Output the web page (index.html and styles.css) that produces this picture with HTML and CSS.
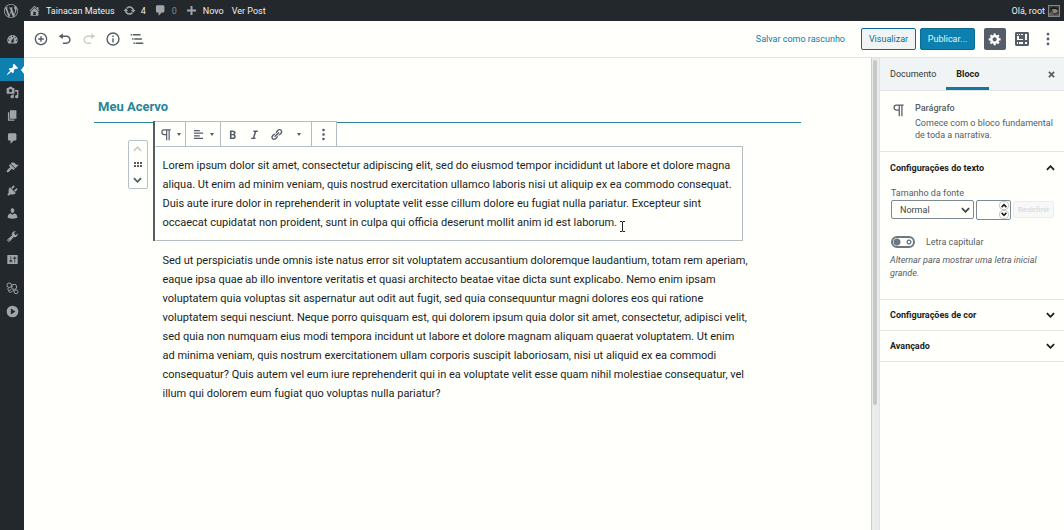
FILE: index.html
```html
<!DOCTYPE html>
<html lang="pt-BR">
<head>
<meta charset="utf-8">
<meta name="viewport" content="width=device-width, initial-scale=1">
<title>Editar post</title>
<link rel="stylesheet" href="styles.css">
</head>
<body>
<div class="app">
  <header class="adminbar">
    <a class="bar-item bar-logo" href="#" aria-label="WordPress"><svg class="icon" viewBox="0 0 20 20"><path d="M20 10c0-5.51-4.49-10-10-10C4.48 0 0 4.49 0 10c0 5.52 4.48 10 10 10 5.51 0 10-4.48 10-10zM7.78 15.37L4.37 6.22c.55-.02 1.17-.08 1.17-.08.5-.06.44-1.13-.06-1.11 0 0-1.45.11-2.37.11-.18 0-.37 0-.58-.01C4.12 2.69 6.87 1.11 10 1.11c2.33 0 4.45.87 6.05 2.34-.68-.11-1.65.39-1.65 1.58 0 .74.45 1.36.9 2.1.35.61.55 1.36.55 2.46 0 1.49-1.4 5-1.4 5l-3.03-8.37c.54-.02.82-.17.82-.17.5-.05.44-1.25-.06-1.22 0 0-1.44.12-2.38.12-.87 0-2.33-.12-2.33-.12-.5-.03-.56 1.2-.06 1.22l.92.08 1.26 3.41zM17.41 10c.24-.64.74-1.87.43-4.25.7 1.29 1.05 2.71 1.05 4.25 0 3.29-1.73 6.24-4.4 7.78.97-2.59 1.94-5.2 2.92-7.78zM6.1 18.09C3.12 16.65 1.11 13.53 1.11 10c0-1.3.23-2.48.72-3.59C3.25 10.3 4.67 14.2 6.1 18.09zm4.03-6.63l2.58 6.98c-.86.29-1.76.45-2.71.45-.79 0-1.57-.11-2.29-.33.81-2.38 1.62-4.74 2.42-7.1z"/></svg></a>
    <a class="bar-item" href="#"><svg class="icon" viewBox="0 0 20 20"><path d="M16 8.5l1.53 1.53-1.06 1.06L10 4.6l-6.47 6.49-1.06-1.06L10 2.5l4 4v-2h2v4zm-6-2.46l6 5.99V18H4v-5.97zM12 17v-5H8v5h4z"/></svg>Tainacan Mateus</a>
    <a class="bar-item" href="#"><svg class="icon" viewBox="0 0 20 20"><path d="M10.2 3.28c3.53 0 6.43 2.61 6.92 6h2.08l-3.5 4-3.5-4h2.32c-.45-1.97-2.21-3.45-4.32-3.45-1.45 0-2.73.71-3.54 1.78L4.95 5.66C6.23 4.2 8.11 3.28 10.2 3.28zm-.4 13.44c-3.52 0-6.43-2.61-6.92-6H.8l3.5-4c1.17 1.33 2.33 2.67 3.5 4H5.48c.45 1.97 2.21 3.45 4.32 3.45 1.45 0 2.73-.71 3.54-1.78l1.71 1.95c-1.28 1.46-3.15 2.38-5.25 2.38z"/></svg>4</a>
    <a class="bar-item bar-muted" href="#"><svg class="icon" viewBox="0 0 20 20"><path d="M5 2h9c1.1 0 2 .9 2 2v7c0 1.1-.9 2-2 2h-2l-5 5v-5H5c-1.1 0-2-.9-2-2V4c0-1.1.9-2 2-2z"/></svg>0</a>
    <a class="bar-item" href="#"><svg class="icon" viewBox="0 0 20 20"><path d="M8.500 3h3v5.500H17v3h-5.500V17h-3v-5.500H3v-3h5.500z"/></svg>Novo</a>
    <a class="bar-item" href="#">Ver Post</a>
    <a class="bar-item bar-user" href="#">Olá, root
      <svg class="avatar" viewBox="0 0 12 12"><rect x=".5" y=".5" width="11" height="11" fill="#3a3b3b" stroke="#83888b"/><path d="M2 4l3-2 5 1v2L7 4 4 6z" fill="#14181a"/><path d="M4 4h4l2 2-2 2H5z" fill="#8d8078"/><path d="M1 8l3-1 2 3 5-1v2H1z" fill="#625e5b"/></svg></a>
  </header>

  <div class="workspace">
    <nav class="menu" aria-label="Menu principal">
      <a href="#" class="menu-item" aria-label="Painel"><svg class="icon" viewBox="0 0 20 20"><path fill-rule="evenodd" d="M3.760 16h12.480c1.100-1.370 1.760-3.110 1.760-5 0-4.420-3.580-8-8-8s-8 3.580-8 8c0 1.890.66 3.630 1.760 5zM10 4c.55 0 1 .45 1 1s-.45 1-1 1-1-.45-1-1 .45-1 1-1zM6 6c.55 0 1 .45 1 1s-.45 1-1 1-1-.45-1-1 .45-1 1-1zm8 0c.55 0 1 .45 1 1s-.45 1-1 1-1-.45-1-1 .45-1 1-1zm-5.370 5.550L12 7v6c0 1.100-.9 2-2 2s-2-.9-2-2c0-.57.24-1.080.63-1.450zM4 10c.55 0 1 .45 1 1s-.45 1-1 1-1-.45-1-1 .45-1 1-1zm12 0c.55 0 1 .45 1 1s-.45 1-1 1-1-.45-1-1 .45-1 1-1z"/></svg></a>
      <a href="#" class="menu-item menu-current" aria-label="Posts"><svg class="icon" viewBox="0 0 20 20"><path d="M10.440 3.020l1.820-1.820 6.360 6.350-1.830 1.820c-1.050-.68-2.480-.57-3.410.36l-.75.75c-.92.93-1.040 2.350-.35 3.410l-1.830 1.820-2.410-2.410-2.800 2.790c-.42.42-3.380 2.710-3.800 2.290s1.860-3.390 2.280-3.810l2.790-2.790L4.100 9.360l1.830-1.820c1.050.69 2.480.57 3.400-.36l.75-.75c.93-.92 1.050-2.350.36-3.410z"/></svg></a>
      <a href="#" class="menu-item" aria-label="Mídia"><svg class="icon" viewBox="0 0 20 20"><path fill-rule="evenodd" d="M13 11V4c0-.55-.45-1-1-1h-1.670L9 1H5L3.670 3H2c-.55 0-1 .45-1 1v7c0 .55.45 1 1 1h10c.55 0 1-.45 1-1zM7 4.500c1.380 0 2.500 1.120 2.500 2.500S8.380 9.500 7 9.500 4.500 8.380 4.500 7 5.620 4.500 7 4.500zM14 6h5v10.500c0 1.380-1.120 2.500-2.500 2.500S14 17.880 14 16.500s1.120-2.500 2.500-2.500c.17 0 .34.02.5.05V9h-3V6zm-4 8.050V13h2v3.500c0 1.380-1.120 2.500-2.500 2.500S7 17.880 7 16.500 8.120 14 9.500 14c.17 0 .34.02.5.05z"/></svg></a>
      <a href="#" class="menu-item" aria-label="Páginas"><svg class="icon" viewBox="0 0 20 20"><path d="M6 15V2h10v13H6zm-1 1h8v2H3V5h2v11z"/></svg></a>
      <a href="#" class="menu-item" aria-label="Comentários"><svg class="icon" viewBox="0 0 20 20"><path d="M5 2h9c1.100 0 2 .9 2 2v7c0 1.100-.9 2-2 2h-2l-5 5v-5H5c-1.100 0-2-.9-2-2V4c0-1.100.9-2 2-2z"/></svg></a>
      <a href="#" class="menu-item menu-group" aria-label="Aparência"><svg class="icon" viewBox="0 0 20 20"><path d="M14.480 11.060L7.410 3.990l1.500-1.500c.5-.56 2.300-.47 3.510.32 1.210.8 1.430 1.280 2.910 2.100 1.180.64 2.450 1.260 4.450.85zm-.71.71L6.700 4.700 4.930 6.470c-.39.39-.39 1.020 0 1.410l1.060 1.060c.39.39.39 1.030 0 1.420-.6.6-1.430 1.110-2.210 1.690-.35.26-.7.53-1.010.84C1.430 14.230.4 16.080 1.400 17.070c.99 1 2.840-.03 4.180-1.360.31-.31.58-.66.85-1.020.57-.78 1.080-1.610 1.690-2.210.39-.39 1.020-.39 1.410 0l1.060 1.060c.39.39 1.020.39 1.410 0z"/></svg></a>
      <a href="#" class="menu-item" aria-label="Plugins"><svg class="icon" viewBox="0 0 20 20"><path d="M13.110 4.360L9.870 7.600 8 5.730l3.240-3.240c.35-.34 1.050-.2 1.560.32.52.51.66 1.210.31 1.550zm-8 1.770l.91-1.120 9.010 9.010-1.190.84c-.71.71-2.630 1.160-3.820 1.160H6.140L4.900 17.260c-.59.59-1.540.59-2.120 0-.59-.58-.59-1.530 0-2.120l1.240-1.240v-3.880c0-1.130.4-3.190 1.090-3.890zm7.260 3.970l3.240-3.240c.34-.35 1.040-.21 1.550.31.52.51.66 1.210.31 1.550l-3.240 3.250z"/></svg></a>
      <a href="#" class="menu-item" aria-label="Usuários"><svg class="icon" viewBox="0 0 20 20"><path d="M10 9.250c-2.270 0-2.730-3.440-2.730-3.440C7 4.020 7.820 2 9.970 2c2.160 0 2.980 2.020 2.710 3.810 0 0-.41 3.440-2.680 3.440zm0 2.570L12.720 10c2.390 0 4.520 2.330 4.520 4.530v2.490s-3.650 1.130-7.240 1.130c-3.650 0-7.240-1.130-7.240-1.130v-2.490c0-2.250 1.940-4.480 4.470-4.480z"/></svg></a>
      <a href="#" class="menu-item" aria-label="Ferramentas"><svg class="icon" viewBox="0 0 20 20"><path fill-rule="evenodd" d="M16.680 9.770c-1.340 1.340-3.300 1.670-4.950.99l-5.410 6.520c-.99.99-2.590.99-3.580 0s-.99-2.590 0-3.570l6.520-5.420c-.68-1.650-.35-3.610.99-4.950 1.280-1.280 3.120-1.620 4.720-1.060l-2.890 2.890 2.820 2.820 2.860-2.870c.53 1.580.18 3.390-1.080 4.650zM3.810 16.210c.4.39 1.040.39 1.430 0 .4-.4.4-1.040 0-1.430-.39-.4-1.030-.4-1.430 0-.39.39-.39 1.030 0 1.430z"/></svg></a>
      <a href="#" class="menu-item" aria-label="Configurações"><svg class="icon" viewBox="0 0 20 20"><path fill-rule="evenodd" d="M18 16V4c0-.55-.45-1-1-1H3c-.55 0-1 .45-1 1v12c0 .55.45 1 1 1h14c.55 0 1-.45 1-1zM8 11h1c.55 0 1 .45 1 1s-.45 1-1 1H8v1.500c0 .28-.22.5-.5.5s-.5-.22-.5-.5V13H6c-.55 0-1-.45-1-1s.45-1 1-1h1V5.500c0-.28.22-.5.5-.5s.5.22.5.5V11zm5-2h-1c-.55 0-1-.45-1-1s.45-1 1-1h1V5.500c0-.28.22-.5.5-.5s.5.22.5.5V7h1c.55 0 1 .45 1 1s-.45 1-1 1h-1v5.500c0 .28-.22.5-.5.5s-.5-.22-.5-.5V9z"/></svg></a>
      <a href="#" class="menu-item menu-group" aria-label="Tainacan"><svg class="icon icon-line" viewBox="0 0 20 20"><circle cx="5" cy="5" r="3.500"/><circle cx="12.500" cy="7.500" r="4"/><circle cx="15.500" cy="15" r="3"/><path d="M5 8.500c-2 1-3 2.500-1.500 4s3.500 0 5-2M4 13c0 2.500 2 3.500 4 2.500s1.500-3 4.500-2M8 5l2 2"/></svg></a>
      <a href="#" class="menu-item" aria-label="Recolher menu"><svg class="icon" viewBox="0 0 20 20"><path fill-rule="evenodd" d="M10 1a9 9 0 1 0 0 18 9 9 0 0 0 0-18zM7.500 5.500L14.500 10l-7 4.500z"/></svg></a>
    </nav>

    <div class="main">
      <div class="editor-header">
        <div class="tools">
          <button class="tool" aria-label="Adicionar bloco"><svg class="icon" viewBox="0 0 20 20"><path d="M10 1c-5 0-9 4-9 9s4 9 9 9 9-4 9-9-4-9-9-9zm0 16c-3.900 0-7-3.100-7-7s3.100-7 7-7 7 3.100 7 7-3.100 7-7 7zm1-11H9v3H6v2h3v3h2v-3h3V9h-3V6z"/></svg></button>
          <button class="tool" aria-label="Desfazer"><svg class="icon" viewBox="0 0 20 20"><path d="M12 5H7V2L1 6l6 4V7h5c2.200 0 4 1.800 4 4s-1.800 4-4 4H7v2h5c3.300 0 6-2.700 6-6s-2.700-6-6-6z"/></svg></button>
          <button class="tool" disabled aria-label="Refazer"><svg class="icon" viewBox="0 0 20 20"><path d="M8 5h5V2l6 4-6 4V7H8c-2.200 0-4 1.800-4 4s1.800 4 4 4h5v2H8c-3.300 0-6-2.700-6-6s2.700-6 6-6z"/></svg></button>
          <button class="tool" aria-label="Estrutura do conteúdo"><svg class="icon" viewBox="2 2 20 20"><path d="M11 7h2v2h-2zm0 4h2v6h-2zm1-8.500a9.500 9.500 0 1 0 0 19 9.500 9.500 0 0 0 0-19zm0 17a7.500 7.500 0 1 1 0-15 7.500 7.500 0 0 1 0 15z"/></svg></button>
          <button class="tool" aria-label="Navegação por blocos"><svg class="icon" viewBox="2 2 20 20"><path d="M5 5H3v2h2V5zm3 8h11v-2H8v2zm9-8H6v2h11V5zM7 11H5v2h2v-2zm0 8h2v-2H7v2zm3-2v2h11v-2H10z"/></svg></button>
        </div>
        <div class="actions">
          <button class="btn-link">Salvar como rascunho</button>
          <button class="btn btn-preview">Visualizar</button>
          <button class="btn btn-publish">Publicar...</button>
          <button class="tool tool-active" aria-label="Configurações"><svg class="icon" viewBox="0 0 20 20"><path fill-rule="evenodd" d="M18 12h-2.180c-.17.7-.44 1.350-.81 1.930l1.540 1.540-2.100 2.100-1.540-1.540c-.58.36-1.230.63-1.910.79V19H8v-2.180c-.68-.16-1.330-.43-1.910-.79l-1.540 1.540-2.120-2.120 1.540-1.540c-.36-.58-.63-1.230-.79-1.910H1V9.030h2.170c.16-.7.44-1.350.8-1.940L2.430 5.550l2.100-2.100 1.540 1.540c.58-.37 1.240-.64 1.930-.81V2h3v2.180c.68.16 1.330.43 1.910.79l1.540-1.540 2.120 2.120-1.540 1.540c.36.59.64 1.240.8 1.940H18V12zm-8.500 1.500c1.660 0 3-1.340 3-3s-1.340-3-3-3-3 1.340-3 3 1.340 3 3 3z"/></svg></button>
          <button class="tool" aria-label="Tainacan"><svg class="icon" viewBox="0 0 14 14"><path fill-rule="evenodd" d="M1 0h12l1 1v12l-1 1H1l-1-1V1zM2 2v1h1V2zM4 2v1h1V2zM6 2v1h2V2zM10 2v6h2V2zM2 4v4h6V7H4V4zM2 10v2h1v-2zM4 10v2h4v-2zM10 10v2h2v-2z"/></svg></button>
          <button class="tool" aria-label="Mais opções"><svg class="icon" viewBox="0 0 20 20"><circle cx="10" cy="3" r="2"/><circle cx="10" cy="10" r="2"/><circle cx="10" cy="17" r="2"/></svg></button>
        </div>
      </div>

      <div class="columns">
        <main class="canvas">
          <h1 class="post-title">Meu Acervo</h1>
          <section class="block block-selected">
            <div class="mover">
              <button disabled aria-label="Mover para cima"><svg class="chevron" viewBox="0 0 10 6"><path d="M1 5l4-4 4 4"/></svg></button>
              <button aria-label="Arrastar"><svg class="grip" viewBox="0 0 8 5"><path d="M0 0h2v2H0zM3 0h2v2H3zM6 0h2v2H6zM0 3h2v2H0zM3 3h2v2H3zM6 3h2v2H6z"/></svg></button>
              <button aria-label="Mover para baixo"><svg class="chevron" viewBox="0 0 10 6"><path d="M1 1l4 4 4-4"/></svg></button>
            </div>
            <div class="toolbar">
              <div class="tool-group">
                <button class="tool-wide" aria-label="Tipo de bloco"><svg class="icon" viewBox="0 0 20 20"><path fill-rule="evenodd" d="M8 2h10v1.800h-1.500V19h-1.800V3.800h-2V19h-1.800v-8H8a4.500 4.500 0 0 1 0-9zm0 1.800a2.700 2.700 0 0 0 0 5.400h2.900V3.800z"/></svg><span class="caret"></span></button>
              </div>
              <div class="tool-group">
                <button class="tool-wide" aria-label="Alinhamento"><svg class="icon" viewBox="0 0 20 20"><path d="M12 5V3H3v2h9zm5 4V7H3v2h14zm-5 4v-2H3v2h9zm5 4v-2H3v2h14z"/></svg><span class="caret"></span></button>
              </div>
              <div class="tool-group">
                <button class="tool" aria-label="Negrito"><svg class="icon" viewBox="0 0 20 20"><path fill-rule="evenodd" d="M6 4v13h4.540c1.370 0 2.460-.33 3.260-1 .8-.66 1.200-1.580 1.200-2.770 0-.84-.17-1.510-.51-2.010s-.9-.85-1.670-1.030v-.09c.57-.1 1.020-.4 1.360-.9s.51-1.130.51-1.910c0-1.140-.39-1.980-1.170-2.500C12.750 4.260 11.500 4 9.780 4H6zm2.570 5.150V6.260h1.360c.73 0 1.270.11 1.610.32.34.22.51.58.51 1.070 0 .54-.16.92-.47 1.150s-.82.35-1.510.35h-1.500zm0 2.190h1.600c1.440 0 2.160.53 2.160 1.610 0 .6-.17 1.050-.51 1.340s-.86.43-1.570.43H8.570v-3.380z"/></svg></button>
                <button class="tool" aria-label="Itálico"><svg class="icon" viewBox="0 0 20 20"><path d="M14.780 6h-2.130l-2.800 9h2.120l-.62 2H4.600l.62-2h2.140l2.800-9H8.030l.62-2h6.750z"/></svg></button>
                <button class="tool" aria-label="Link"><svg class="icon" viewBox="0 0 20 20"><path d="M17.740 2.760c1.680 1.690 1.680 4.410 0 6.100l-1.530 1.520c-1.120 1.120-2.700 1.470-4.140 1.090l2.620-2.610.76-.77.76-.76c.84-.84.84-2.200 0-3.040-.84-.85-2.200-.85-3.040 0l-.77.76-3.380 3.380c-.37-1.440-.02-3.020 1.100-4.140l1.520-1.530c1.690-1.680 4.420-1.680 6.100 0zM8.590 13.430l5.340-5.340c.42-.42.42-1.100 0-1.520-.44-.43-1.130-.39-1.530 0l-5.330 5.340c-.42.42-.42 1.100 0 1.520.44.43 1.130.39 1.520 0zm-.76 2.290l4.140-4.150c.38 1.440.03 3.020-1.090 4.140l-1.520 1.530c-1.690 1.680-4.410 1.680-6.100 0-1.680-1.680-1.680-4.420 0-6.100l1.530-1.520c1.120-1.120 2.700-1.470 4.140-1.100l-4.140 4.150c-.85.84-.85 2.200 0 3.050.84.84 2.200.84 3.040 0z"/></svg></button>
                <button class="tool" aria-label="Mais formatação"><span class="caret"></span></button>
              </div>
              <div class="tool-group">
                <button class="tool" aria-label="Opções do bloco"><svg class="icon" viewBox="0 0 20 20"><circle cx="10" cy="3" r="2"/><circle cx="10" cy="10" r="2"/><circle cx="10" cy="17" r="2"/></svg></button>
              </div>
            </div>
            <p class="block-text">Lorem ipsum dolor sit amet, consectetur adipiscing elit, sed do eiusmod tempor incididunt ut labore et dolore magna aliqua. Ut enim ad minim veniam, quis nostrud exercitation ullamco laboris nisi ut aliquip ex ea commodo consequat. Duis aute irure dolor in reprehenderit in voluptate velit esse cillum dolore eu fugiat nulla pariatur. Excepteur sint occaecat cupidatat non proident, sunt in culpa qui officia deserunt mollit anim id est laborum.</p>
            <svg class="pointer" viewBox="0 0 5 11"><path d="M0 .5h2l.5.5.5-.5h2M0 10.500h2l.5-.5.5.5h2M2.500 1v9"/></svg>
          </section>
          <section class="block block-wide">
            <p class="block-text">Sed ut perspiciatis unde omnis iste natus error sit voluptatem accusantium doloremque laudantium, totam rem aperiam, eaque ipsa quae ab illo inventore veritatis et quasi architecto beatae vitae dicta sunt explicabo. Nemo enim ipsam voluptatem quia voluptas sit aspernatur aut odit aut fugit, sed quia consequuntur magni dolores eos qui ratione voluptatem sequi nesciunt. Neque porro quisquam est, qui dolorem ipsum quia dolor sit amet, consectetur, adipisci velit, sed quia non numquam eius modi tempora incidunt ut labore et dolore magnam aliquam quaerat voluptatem. Ut enim <br>ad minima veniam, quis nostrum exercitationem ullam corporis suscipit laboriosam, nisi ut aliquid ex ea commodi consequatur? Quis autem vel eum iure reprehenderit qui in ea voluptate velit esse quam nihil molestiae consequatur, vel illum qui dolorem eum fugiat quo voluptas nulla pariatur?</p>
          </section>
        </main>
        <div class="scrollbar"><div class="scroll-thumb"></div></div>

        <aside class="settings">
          <div class="tabs">
            <button class="tab">Documento</button>
            <button class="tab tab-active">Bloco</button>
            <button class="close" aria-label="Fechar"><svg class="cross" viewBox="0 0 8 8"><path d="M1 1l6 6M7 1L1 7"/></svg></button>
          </div>
          <div class="card">
            <svg class="icon" viewBox="0 0 20 20"><path fill-rule="evenodd" d="M8 2h10v1.800h-1.500V19h-1.800V3.800h-2V19h-1.800v-8H8a4.500 4.500 0 0 1 0-9zm0 1.800a2.700 2.700 0 0 0 0 5.400h2.900V3.800z"/></svg>
            <div>
              <h2 class="card-title">Parágrafo</h2>
              <p class="card-text">Comece com o bloco fundamental de toda a narrativa.</p>
            </div>
          </div>
          <section class="panel panel-open">
            <button class="panel-toggle" aria-expanded="true">Configurações do texto<svg class="chevron" viewBox="0 0 10 6"><path d="M1 5l4-4 4 4"/></svg></button>
            <label class="field-label" for="size">Tamanho da fonte</label>
            <div class="size-row">
              <div class="select-wrap">
                <select id="size"><option>Normal</option></select>
                <svg class="chevron" viewBox="0 0 10 6"><path d="M1 1l4 4 4-4"/></svg>
              </div>
              <div class="number-wrap">
                <input type="number" aria-label="Tamanho personalizado">
                <div class="spin"><button aria-label="Aumentar"><svg viewBox="0 0 10 6"><path d="M2 5l3-3 3 3"/></svg></button><button aria-label="Diminuir"><svg viewBox="0 0 10 6"><path d="M2 1l3 3 3-3"/></svg></button></div>
              </div>
              <button class="reset" disabled>Redefinir</button>
            </div>
            <div class="toggle-row">
              <input class="toggle" type="checkbox" id="cap">
              <label for="cap">Letra capitular</label>
            </div>
            <p class="help">Alternar para mostrar uma letra inicial grande.</p>
          </section>
          <section class="panel"><button class="panel-toggle">Configurações de cor<svg class="chevron" viewBox="0 0 10 6"><path d="M1 1l4 4 4-4"/></svg></button></section>
          <section class="panel"><button class="panel-toggle">Avançado<svg class="chevron" viewBox="0 0 10 6"><path d="M1 1l4 4 4-4"/></svg></button></section>
        </aside>
      </div>
    </div>
  </div>
</div>
</body>
</html>
```
FILE: styles.css
```css
* { box-sizing: border-box; }
body { margin: 0; font: 9px/12px Roboto, sans-serif; color: #555d66; background: #fffffc; }
button, input, select { font: inherit; color: inherit; margin: 0; padding: 0; border: 0; background: none; }
h1, h2, p { margin: 0; }
a { color: inherit; text-decoration: none; }
svg { display: block; fill: currentColor; flex: none; }
.icon { width: 14px; height: 14px; }
.icon-line { fill: none; stroke: currentColor; stroke-width: 1.5; }
.chevron { width: 9px; height: 6px; fill: none; stroke: currentColor; stroke-width: 2; }

.app { display: flex; flex-direction: column; min-height: 100vh; }

.adminbar { display: flex; align-items: center; height: 21px; padding: 0 4px; gap: 8px; background: #22282c; color: #eee; font-size: 9px; }
.bar-item { display: flex; align-items: center; gap: 5px; }
.bar-item .icon { width: 13px; height: 13px; color: #a0a5aa; }
.bar-logo { margin-right: 2px; }
.bar-logo .icon { width: 14px; height: 14px; }
.bar-muted { color: #82878c; }
.bar-user { margin-left: auto; gap: 3px; }
.avatar { width: 12px; height: 12px; }

.workspace { display: flex; flex: 1; }
.menu { width: 24px; flex: none; padding-top: 7px; background: #22282c; color: #a0a5aa; }
.menu-item { display: flex; align-items: center; justify-content: center; height: 23px; }
.menu-item .icon { width: 13px; height: 13px; }
.menu-group { margin-top: 6px; }
.menu-current { position: relative; margin-top: 7px; background: #0d80b0; color: #fff; }
.menu-current::after { content: ""; position: absolute; right: 0; top: 8px; border: 4px solid transparent; border-left: 0; border-right: 3px solid #fffffc; }

.main { display: flex; flex: 1; flex-direction: column; min-width: 0; }
.editor-header { display: flex; align-items: center; justify-content: space-between; height: 37px; padding: 0 5px 0 6px; border-bottom: 1px solid #e2e4e4; }
.tools, .actions { display: flex; align-items: center; }
.tools { gap: 2px; }
.actions { gap: 4px; }
.tool { display: flex; align-items: center; justify-content: center; width: 22px; height: 22px; border-radius: 2px; }
.tool:disabled { color: #ccc; }
.tool-active { margin: 0 1px 0 5px; background: #555d66; color: #fff; }
.btn-link { margin-right: 12px; color: #0a7da8; }
.btn { height: 22px; width: 55px; border: 1px solid #0a6c94; border-radius: 2px; }
.btn-preview { background: #f1f4f4; color: #0a6c94; }
.btn-publish { background: #0d80b0; color: #e6f4f8; }

.columns { display: flex; flex: 1; }
.canvas { flex: 1; min-width: 0; padding: 36px 70px 24px; }
.post-title { padding: 4px 4px 6px; font-size: 13px; line-height: 18px; font-weight: 700; color: #298596; border-bottom: 1px solid #298596; }
.block { position: relative; max-width: 590px; margin: 0 auto; font-size: 11px; line-height: 19px; color: #191e23; }
.block-selected { margin-top: -2px; border-left: 2px solid #555d66; }
.block-text { padding: 10px 0 9px 10px; }
.block-selected .block-text { padding: 9px 7px 8px; border: 1px solid #b5bcc2; border-left-color: transparent; }
.block-wide .block-text { margin-right: -9px; }
.toolbar { display: flex; width: max-content; height: 25px; color: #555d66; border-top: 1px solid #b5bcc2; background: #fffffc; }
.tool-group { display: flex; align-items: center; padding: 0 1px; border-right: 1px solid #b5bcc2; }
.tool-group:first-child { padding: 0; }
.tool-wide { display: flex; align-items: center; justify-content: center; gap: 5px; width: 30px; height: 24px; }
.tool-group + .tool-group .tool-wide { width: 32px; }
.toolbar .icon { width: 13px; height: 13px; }
.caret { border: 2px solid transparent; border-top: 3px solid currentColor; border-bottom: 0; }
.mover { position: absolute; top: 19px; left: -27px; display: flex; flex-direction: column; width: 20px; height: 49px; color: #555d66; border: 1px solid #b5c0c8; border-radius: 2px; }
.mover button { display: flex; flex: 1; align-items: center; justify-content: center; }
.mover button:disabled { color: #ccc; }
.grip { width: 8px; height: 5px; }
.pointer { position: absolute; left: 465px; bottom: 9px; width: 5px; height: 11px; fill: none; stroke: #222; }

.scrollbar { width: 8px; flex: none; padding: 2px 1px; border-left: 1px solid #c8cccb; background: #e9ecea; }
.scroll-thumb { width: 4px; height: 345px; border-radius: 2px; background: #c5c8c5; }

.settings { width: 185px; flex: none; border-left: 1px solid #e0e3e3; }
.tabs { display: flex; height: 33px; background: #f1f4f4; border-bottom: 1px solid #e2e4e7; color: #32373c; }
.tab { padding: 0 10px; border-bottom: 3px solid transparent; border-top: 2px solid transparent; }
.tab-active { font-weight: 700; color: #191e23; border-bottom-color: #11789e; }
.close { margin-left: auto; padding: 0 10px; color: #555d66; }
.cross { width: 7px; height: 7px; fill: none; stroke: currentColor; stroke-width: 2; }
.card { display: flex; gap: 10px; padding: 11px 10px 10px 11px; border-bottom: 1px solid #e2e4e7; }
.card-title { font-size: 9px; line-height: 12px; font-weight: 500; padding-bottom: 3px; }
.card .icon { margin-top: 1px; }
.panel { padding: 0 10px; border-bottom: 1px solid #e2e4e7; }
.panel-open { padding-top: 1px; padding-bottom: 19px; }
.panel-toggle { display: flex; align-items: center; justify-content: space-between; width: 100%; height: 30px; font-weight: 700; color: #191e23; }
.panel-toggle .chevron, .close .cross { margin-right: -1px; }
.field-label { display: block; margin-top: 4px; padding-left: 1px; }
.size-row { display: flex; gap: 2px; height: 20px; margin-top: 1px; padding-left: 1px; }
.select-wrap { position: relative; width: 84px; color: #40464d; }
.select-wrap select { appearance: none; width: 100%; height: 19px; padding: 0 8px; border: 1px solid #7e8993; border-radius: 2px; background: transparent; }
.select-wrap .chevron { position: absolute; right: 4px; top: 7px; }
.number-wrap { position: relative; width: 36px; }
.number-wrap input { appearance: textfield; width: 100%; height: 20px; border: 1px solid #7e8993; border-radius: 2px; }
.spin { position: absolute; top: 1px; right: 2px; display: flex; flex-direction: column; color: #191e23; }
.spin button { display: flex; align-items: center; justify-content: center; width: 10px; height: 9px; border: 1px solid #c4c8c8; border-radius: 4px; }
.spin svg { width: 8px; height: 5px; fill: none; stroke: currentColor; stroke-width: 2; }
.reset { width: 41px; height: 17px; margin-top: 1px; border: 1px solid #eceeee; border-radius: 2px; background: #f7f8f7; color: #d3d6d6; font-size: 8px; }
.toggle-row { display: flex; align-items: center; gap: 11px; margin-top: 16px; padding-left: 1px; }
.toggle { appearance: none; width: 24px; height: 12px; border: 2px solid #6c7781; border-radius: 6px; background: radial-gradient(circle at 4px 4px, #6c7781 3px, transparent 4px), radial-gradient(circle at 16px 4px, transparent 1px, #6c7781 1px, #6c7781 2px, transparent 3px); }
.help { margin-top: 6px; line-height: 13px; font-style: italic; }
```
